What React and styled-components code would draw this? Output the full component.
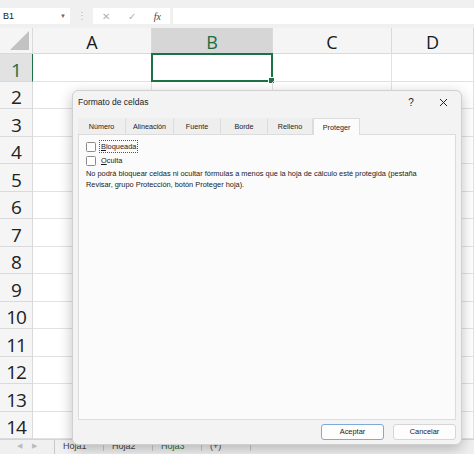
import React from 'react'
import styled, { createGlobalStyle } from 'styled-components'

const Global = createGlobalStyle`
  html, body { margin: 0; padding: 0; }
  body {
    width: 474px;
    height: 454px;
    overflow: hidden;
    background: #ffffff;
    font-family: 'Liberation Sans', Arial, sans-serif;
  }
`

const Page = styled.div`
  position: relative;
  width: 474px;
  height: 454px;
  display: flex;
  flex-direction: column;
  overflow: hidden;
`

const FormulaBar = styled.div`
  height: 32px;
  background: #f0f0f0;
  display: flex;
  align-items: flex-start;
  padding-top: 8px;
  box-sizing: border-box;
`

const NameBox = styled.div`
  width: 70px;
  height: 16px;
  background: #fff;
  display: flex;
  align-items: center;
  justify-content: space-between;
  padding: 0 4px 0 3px;
  box-sizing: border-box;
  font-size: 9px;
  color: #222;
`

const Caret = styled.span`
  font-size: 6px;
  color: #666;
`

const Dots = styled.div`
  width: 23px;
  text-align: center;
  color: #b8b8b8;
  font-size: 10px;
  line-height: 16px;
  letter-spacing: -1px;
`

const FxBox = styled.div`
  width: 77px;
  height: 16px;
  background: #fff;
  display: flex;
  align-items: center;
  justify-content: space-around;
  color: #b0b0b0;
  font-size: 10px;
`

const FxLabel = styled.span`
  font-family: 'Liberation Serif', serif;
  font-style: italic;
  color: #444;
  font-size: 10px;
`

const FormulaInput = styled.div`
  flex: 1;
  height: 16px;
  margin-left: 3px;
  background: #fff;
`

const Sheet = styled.div`
  display: grid;
  grid-template-columns: 33px 119px 121px 119px 1fr;
  grid-template-rows: 26px repeat(14, 27.5px);
  flex: none;
`

const Corner = styled.div`
  background: #f5f5f5;
  border-right: 1px solid #dadada;
  border-bottom: 1px solid #dadada;
  position: relative;
  &::after {
    content: '';
    position: absolute;
    right: 3px;
    bottom: 3px;
    border-style: solid;
    border-width: 0 0 19px 19px;
    border-color: transparent transparent #c2c2c2 transparent;
  }
`

const ColHead = styled.div`
  background: ${p => (p.active ? '#d6d6d6' : '#f5f5f5')};
  color: ${p => (p.active ? '#1f6b40' : '#1a1a1a')};
  border-right: 1px solid #dadada;
  border-bottom: 1px solid ${p => (p.active ? '#1e7145' : '#dadada')};
  display: flex;
  align-items: center;
  justify-content: center;
  font-size: 18px;
  font-family: 'Open Sans', sans-serif;
  padding-top: 3px;
  box-sizing: border-box;
`

const RowHead = styled.div`
  background: ${p => (p.active ? '#e2e2e2' : '#f5f5f5')};
  color: ${p => (p.active ? '#1f6b40' : '#222')};
  border-right: 1px solid ${p => (p.active ? '#1e7145' : '#dadada')};
  border-bottom: 1px solid #dadada;
  display: flex;
  align-items: center;
  justify-content: center;
  font-size: 19px;
  font-family: 'Open Sans', sans-serif;
  letter-spacing: -1px;
  padding-top: 5px;
  box-sizing: border-box;
`

const Cell = styled.div`
  border-right: 1px solid #e2e2e2;
  border-bottom: 1px solid #e2e2e2;
  box-sizing: border-box;
  position: relative;
  ${p =>
    p.selected &&
    `
    border: 2px solid #1e7145;
    margin: -1px 0 0 -1px;
    &::after {
      content: '';
      position: absolute;
      right: -4px;
      bottom: -4px;
      width: 5px;
      height: 5px;
      background: #1e7145;
      border: 1px solid #fff;
    }
  `}
`

const TabsBar = styled.div`
  flex: 1;
  background: #f0f0f0;
  border-top: 1px solid #d4d4d4;
  display: flex;
  align-items: flex-start;
  font-size: 9px;
  color: #444;
`

const Arrows = styled.div`
  width: 54px;
  display: flex;
  justify-content: center;
  gap: 10px;
  color: #bbb;
  font-size: 7px;
  padding-top: 2px;
  border-right: 1px solid #c8c8c8;
  height: 12px;
`

const SheetTab = styled.div`
  width: 40px;
  padding-left: 8px;
  border-right: 1px solid #c8c8c8;
  color: ${p => (p.active ? '#1e7145' : '#444')};
  padding-top: 1px;
`

/* dialog */

const Dialog = styled.div`
  position: absolute;
  left: 72px;
  top: 90px;
  width: 390px;
  height: 355px;
  background: #f3f3f3;
  border: 1px solid #d0d0d0;
  border-radius: 6px;
  box-shadow: 0 4px 14px rgba(0, 0, 0, 0.25);
  display: flex;
  flex-direction: column;
  box-sizing: border-box;
  padding: 0 5px 0 5px;
`

const TitleBar = styled.div`
  height: 22px;
  display: flex;
  align-items: center;
  font-size: 8.5px;
  color: #1a1a1a;
  padding-left: 0px;
`

const Title = styled.div`
  flex: 1;
`

const TitleButton = styled.div`
  width: ${p => p.w}px;
  display: flex;
  justify-content: center;
  align-items: center;
  color: #222;
  font-size: 10px;
`

const TabStrip = styled.div`
  margin-top: 5px;
  display: flex;
  height: 16px;
  padding-left: 0px;
`

const Tab = styled.div`
  width: ${p => p.w}px;
  display: flex;
  align-items: center;
  justify-content: center;
  font-size: 7.2px;
  color: #222;
  background: ${p => (p.active ? '#fbfbfb' : '#eeeeee')};
  border-right: 1px solid #dcdcdc;
  border-top: 1px solid ${p => (p.active ? '#dcdcdc' : '#eeeeee')};
  border-left: ${p => (p.active ? '1px solid #dcdcdc' : 'none')};
  box-sizing: border-box;
  margin-bottom: ${p => (p.active ? '-1px' : '0')};
  position: relative;
  z-index: ${p => (p.active ? 1 : 0)};
`

const Panel = styled.div`
  height: 286px;
  background: #fbfbfb;
  border: 1px solid #dcdcdc;
  margin-right: 0;
  box-sizing: border-box;
  padding: 5px 7px;
  display: flex;
  flex-direction: column;
  font-size: 7.4px;
  color: #1a1a1a;
`

const CheckRow = styled.label`
  display: flex;
  align-items: center;
  gap: 3px;
  height: 13px;
  margin-bottom: 1px;
`

const Box = styled.span`
  width: 8px;
  height: 8px;
  border: 1px solid #8a8a8a;
  border-radius: 1.5px;
  background: #fff;
  flex: none;
`

const CheckLabel = styled.span`
  padding: 1px 1px;
  border: 1px dotted ${p => (p.focus ? '#555' : 'transparent')};
`

const Key = styled.span`
  text-decoration: underline;
`

const Note = styled.p`
  margin: 0;
  line-height: 11px;
  width: 352px;
`

const Footer = styled.div`
  flex: 1;
  display: flex;
  justify-content: flex-end;
  align-items: center;
  gap: 9px;
  padding-bottom: 1px;
`

const Button = styled.div`
  width: 63px;
  height: 16px;
  box-sizing: border-box;
  background: #fdfdfd;
  border: 1px solid ${p => (p.primary ? '#7fa9d6' : '#d6d6d6')};
  border-radius: 3px;
  display: flex;
  align-items: center;
  justify-content: center;
  font-size: 7.4px;
  color: #1a1a1a;
`

const tabs = [
  ['Número', 48],
  ['Alineación', 48],
  ['Fuente', 47],
  ['Borde', 47],
  ['Relleno', 45],
  ['Proteger', 47],
]

export default function App() {
  const rows = Array.from({ length: 14 }, (_, i) => i + 1)
  return (
    <Page>
      <Global />
      <FormulaBar>
        <NameBox>
          <span>B1</span>
          <Caret>▼</Caret>
        </NameBox>
        <Dots>⋮</Dots>
        <FxBox>
          <span>✕</span>
          <span>✓</span>
          <FxLabel>fx</FxLabel>
        </FxBox>
        <FormulaInput />
      </FormulaBar>
      <Sheet>
        <Corner />
        <ColHead>A</ColHead>
        <ColHead active>B</ColHead>
        <ColHead>C</ColHead>
        <ColHead>D</ColHead>
        {rows.map(r => (
          <React.Fragment key={r}>
            <RowHead active={r === 1}>{r}</RowHead>
            <Cell />
            <Cell selected={r === 1} />
            <Cell />
            <Cell />
          </React.Fragment>
        ))}
      </Sheet>
      <TabsBar>
        <Arrows>
          <span>◀</span>
          <span>▶</span>
        </Arrows>
        <SheetTab>Hoja1</SheetTab>
        <SheetTab>Hoja2</SheetTab>
        <SheetTab active>Hoja3</SheetTab>
        <SheetTab>(+)</SheetTab>
      </TabsBar>

      <Dialog>
        <TitleBar>
          <Title>Formato de celdas</Title>
          <TitleButton w={38}>?</TitleButton>
          <TitleButton w={26}>
            <svg width="9" height="9" viewBox="0 0 9 9">
              <path d="M1 1L8 8M8 1L1 8" stroke="#222" strokeWidth="1" />
            </svg>
          </TitleButton>
        </TitleBar>
        <TabStrip>
          {tabs.map(([name, w]) => (
            <Tab key={name} w={w} active={name === 'Proteger'}>
              {name}
            </Tab>
          ))}
        </TabStrip>
        <Panel>
          <CheckRow>
            <Box />
            <CheckLabel focus>
              <Key>B</Key>loqueada
            </CheckLabel>
          </CheckRow>
          <CheckRow>
            <Box />
            <CheckLabel>
              <Key>O</Key>culta
            </CheckLabel>
          </CheckRow>
          <Note>
            No podrá bloquear celdas ni ocultar fórmulas a menos que la hoja de cálculo esté
            protegida (pestaña Revisar, grupo Protección, botón Proteger hoja).
          </Note>
        </Panel>
        <Footer>
          <Button primary>Aceptar</Button>
          <Button>Cancelar</Button>
        </Footer>
      </Dialog>
    </Page>
  )
}
